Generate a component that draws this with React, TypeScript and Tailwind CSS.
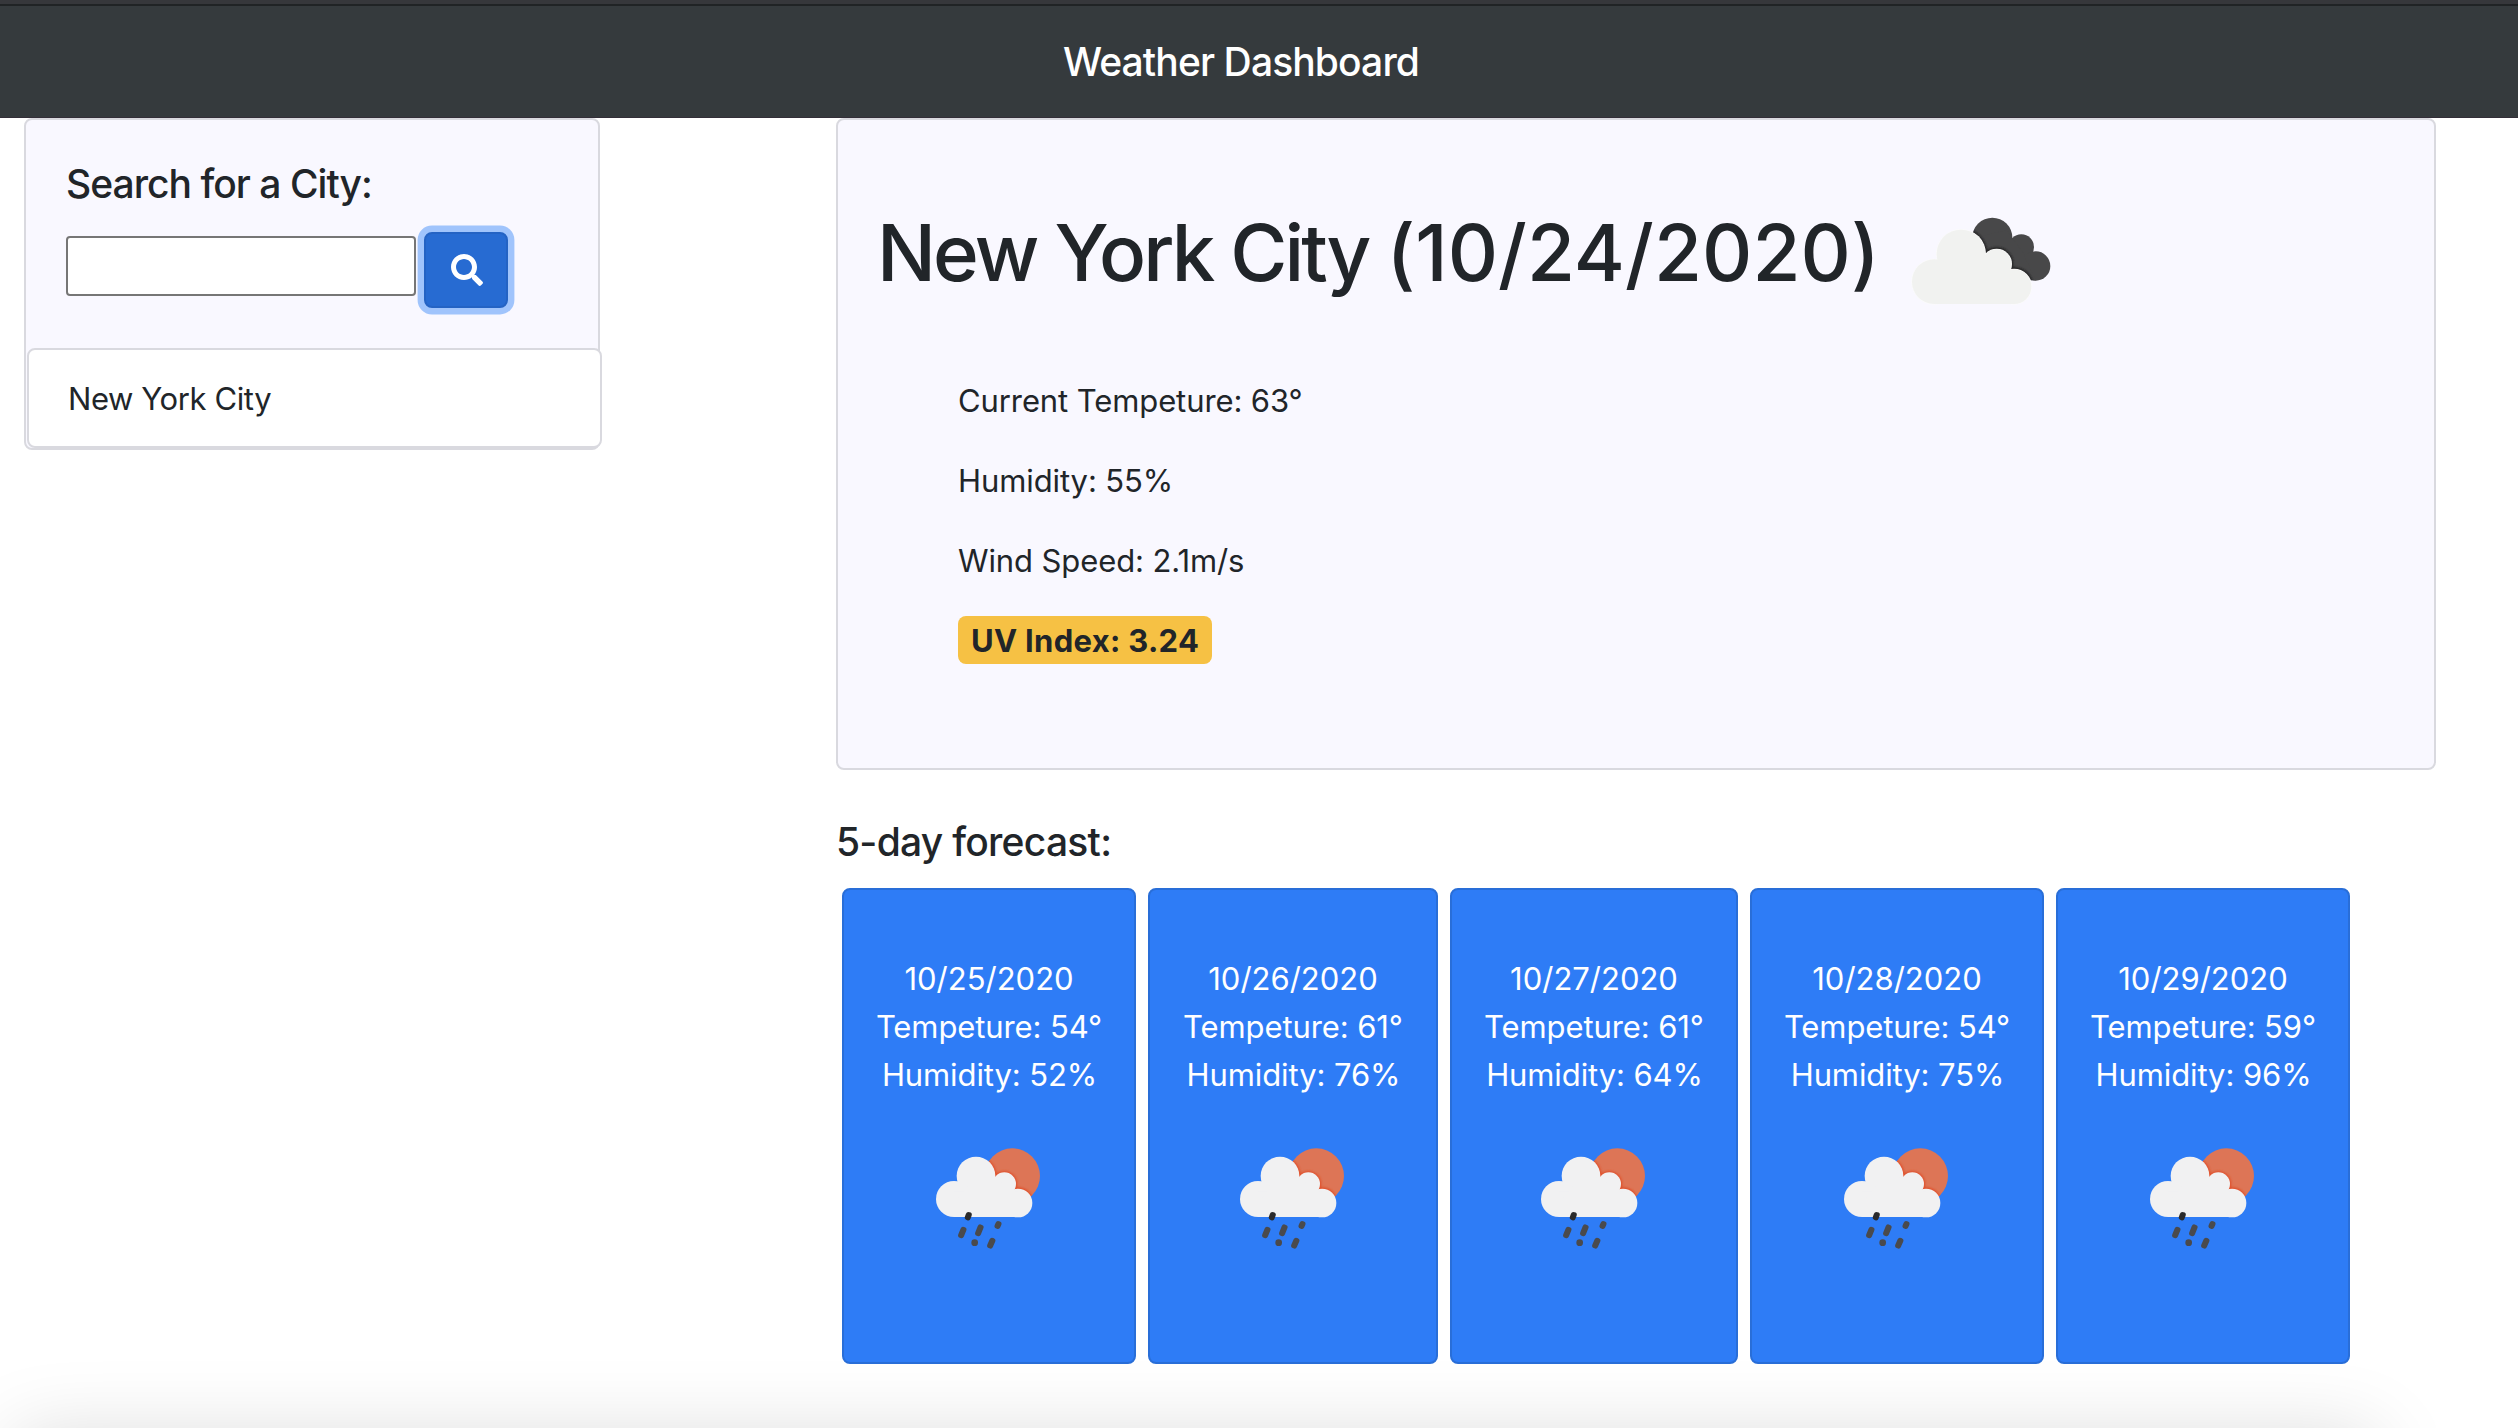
import { FaSearch } from 'react-icons/fa';

type Day = { date: string; temp: number; humidity: number; width: string };

const days: Day[] = [
  { date: '10/25/2020', temp: 54, humidity: 52, width: 'w-[294px]' },
  { date: '10/26/2020', temp: 61, humidity: 76, width: 'w-[290px]' },
  { date: '10/27/2020', temp: 61, humidity: 64, width: 'w-[288px]' },
  { date: '10/28/2020', temp: 54, humidity: 75, width: 'w-[294px]' },
  { date: '10/29/2020', temp: 59, humidity: 96, width: 'w-[294px]' },
];

/* Light cloud of the "broken clouds" icon; grow widens every puff for halos. */
function FrontCloud({ grow = 0 }: { grow?: number }) {
  return (
    <>
      <circle cx="243" cy="192" r={73 + grow} />
      <circle cx="163" cy="275" r={67 + grow} />
      <circle cx="350" cy="222" r={44 + grow} />
      <circle cx="402" cy="290" r={52 + grow} />
      <rect x="163" y="250" width="239" height="92" />
      <polygon points="243,192 312,200 350,222 385,250 402,290 163,290" />
    </>
  );
}

function BackCloud() {
  return (
    <>
      <circle cx="337" cy="143" r="60" />
      <circle cx="424" cy="171" r="38" />
      <circle cx="467" cy="228" r="44" />
      <polygon points="300,140 380,120 430,190 467,271 400,271 300,200" />
    </>
  );
}

function CloudsIcon() {
  return (
    <svg viewBox="0 0 600 390" className="h-[130px] w-[200px] shrink-0" aria-hidden="true">
      <defs>
        <clipPath id="back-cloud">
          <BackCloud />
        </clipPath>
        <filter id="soft">
          <feGaussianBlur stdDeviation="3" />
        </filter>
      </defs>
      <g fill="#484849">
        <BackCloud />
      </g>
      <g clipPath="url(#back-cloud)">
        <g fill="#202021" filter="url(#soft)">
          <FrontCloud grow={6} />
        </g>
      </g>
      <g fill="#fbfbfb">
        <FrontCloud grow={2} />
      </g>
      <g fill="#f1f2f0">
        <FrontCloud />
      </g>
    </svg>
  );
}

function RainCloud({ grow = 0 }: { grow?: number }) {
  return (
    <>
      <circle cx="228" cy="168" r={58 + grow} />
      <circle cx="162" cy="237" r={54 + grow} />
      <circle cx="313" cy="192" r={35 + grow} />
      <circle cx="354" cy="249" r={43 + grow} />
      <rect x="162" y="215" width="192" height="76" />
      <polygon points="228,168 284,175 313,192 344,212 354,249 162,249" />
    </>
  );
}

function RainIcon() {
  return (
    <svg viewBox="0 0 534 450" className="h-[150px] w-[178px] shrink-0" aria-hidden="true">
      <defs>
        <clipPath id="sun">
          <circle cx="337" cy="168" r="83" />
        </clipPath>
        <filter id="glow">
          <feGaussianBlur stdDeviation="3" />
        </filter>
      </defs>
      <circle cx="337" cy="168" r="83" fill="#dd7556" />
      <g clipPath="url(#sun)">
        <g fill="#e0502c" filter="url(#glow)">
          <RainCloud grow={4} />
        </g>
      </g>
      <g fill="#f1f1f2">
        <RainCloud />
      </g>
      <g fill="#4a4a4c">
        <rect x="196" y="276" width="18" height="25" rx="8" transform="rotate(20 205 288)" fill="#2a2a2b" />
        <rect x="178" y="320" width="18" height="35" rx="8" transform="rotate(22 187 337)" />
        <rect x="229" y="313" width="18" height="36" rx="8" transform="rotate(22 238 331)" />
        <rect x="285" y="303" width="18" height="24" rx="8" transform="rotate(22 294 315)" />
        <circle cx="224" cy="368" r="10" />
        <rect x="265" y="353" width="18" height="33" rx="8" transform="rotate(24 274 369)" />
      </g>
    </svg>
  );
}

function Header() {
  return (
    <header className="h-[118px] border-b border-[#332e38] bg-[#353a3d]">
      <div className="h-1 bg-[#36373b]" />
      <div className="h-0.5 bg-[#202325]" />
      <h1 className="pt-8 pr-9 text-center text-[39px] leading-[48px] font-medium tracking-[-0.884px] text-white">
        Weather Dashboard
      </h1>
    </header>
  );
}

function SearchPanel() {
  return (
    <aside className="ml-6 h-[332px] w-[576px] shrink-0 rounded-lg border-2 border-[#d9d9df] bg-[#f9f8ff]">
      <div className="px-10 py-10">
        <h2 className="text-[39px] leading-[48px] font-medium tracking-[-0.98px]">Search for a City:</h2>
        <div className="mt-6 flex items-start gap-2">
          <input
            type="text"
            aria-label="City"
            className="mt-1 h-[60px] w-[350px] rounded-[4px] border-2 border-[#767676] bg-white px-2 text-[31px] outline-none"
          />
          <button
            type="button"
            aria-label="Search"
            className="flex h-[76px] w-[84px] items-center justify-center rounded-lg border-2 border-[#2463c4] bg-[#276bd2] pl-px text-white shadow-[0_0_0_6.4px_#a0c4fc]"
          >
            <FaSearch className="size-8" />
          </button>
        </div>
      </div>
      <ul>
        <li className="ml-px h-[100px] w-[575px] rounded-lg border-2 border-[#d9d9df] bg-white px-[39px] pt-[25px] text-[31px] leading-[48px] tracking-[-0.4px]">
          New York City
        </li>
      </ul>
    </aside>
  );
}

function CurrentWeather() {
  return (
    <section className="h-[652px] rounded-lg border-2 border-[#d9d9df] bg-[#f9f8ff] pt-[70px] pl-[39px]">
      <div className="flex items-start">
        <h2 className="pt-[15px] text-[78px] leading-[96px] font-medium whitespace-nowrap">
          <span className="tracking-[-2.9px]">New York City </span>
          <span className="tracking-[0.05px]">(10/24/2020)</span>
        </h2>
        <CloudsIcon />
      </div>
      <ul className="mt-[57px] flex flex-col items-start gap-8 pl-[81px] text-[31px] leading-[48px] tracking-[-0.1px]">
        <li>Current Tempeture: 63°</li>
        <li>Humidity: 55%</li>
        <li>Wind Speed: 2.1m/s</li>
        <li className="-mt-px w-[254px] rounded-lg bg-[#f6c144] pt-px pl-[13px] leading-[47px] font-bold tracking-[0.3px]">
          UV Index: 3.24
        </li>
      </ul>
    </section>
  );
}

function Forecast() {
  return (
    <section className="mt-12">
      <h2 className="text-[39px] leading-[48px] font-medium tracking-[-0.74px]">5-day forecast:</h2>
      <div className="mt-[22px] ml-1.5 flex gap-3">
        {days.map((day) => (
          <article
            key={day.date}
            className={`${day.width} flex h-[476px] shrink-0 flex-col items-center rounded-lg border-2 border-[#296ed8] bg-[#2e7cf6] pt-[65px] text-[31px] leading-[48px] whitespace-nowrap text-white`}
          >
            <p>{day.date}</p>
            <p className="tracking-[-0.1px]">Tempeture: {day.temp}°</p>
            <p className="mb-[21px] pl-px tracking-[-0.1px]">Humidity: {day.humidity}%</p>
            <RainIcon />
          </article>
        ))}
      </div>
    </section>
  );
}

export default function App() {
  return (
    <div className="relative h-[1428px] w-[2518px] overflow-hidden bg-white font-[Inter,sans-serif] text-[#212529]">
      <Header />
      <main className="flex items-start">
        <SearchPanel />
        <div className="ml-[236px] w-[1600px]">
          <CurrentWeather />
          <Forecast />
        </div>
      </main>
      {/* Soft shadow rising from below the window edge */}
      <div className="pointer-events-none absolute top-[1436px] left-[15px] h-[200px] w-[2360px] shadow-[0_0_80px_rgba(0,0,0,0.15)]" />
    </div>
  );
}
